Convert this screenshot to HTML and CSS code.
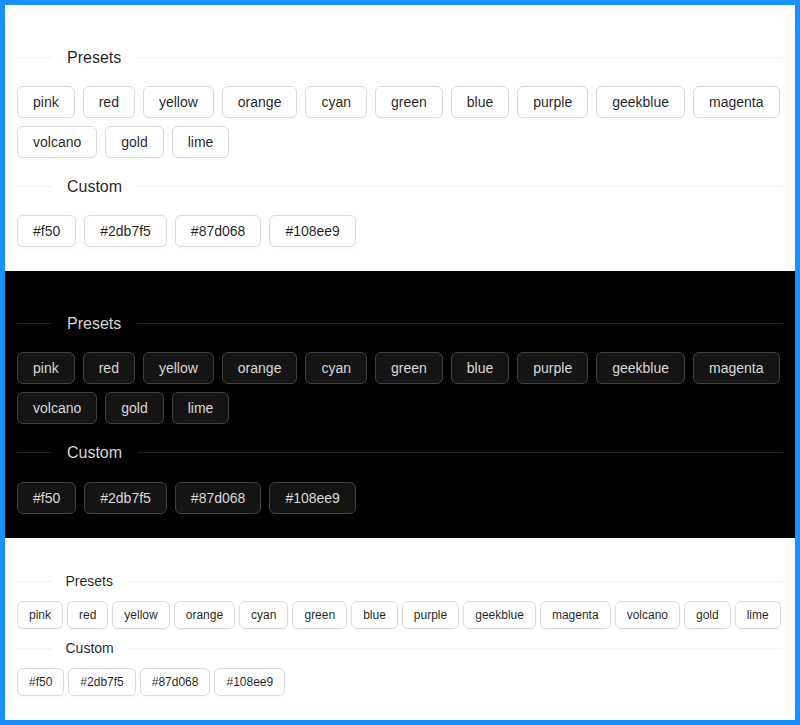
FILE: index.html
```html
<!DOCTYPE html>
<html>
<head>
<meta charset="utf-8">
<link rel="stylesheet" href="styles.css">
</head>
<body>
<div class="frame">
  <section class="panel light">
    <div class="divider"><span class="divider-text">Presets</span></div>
    <div class="space">
      <button class="btn">pink</button><button class="btn">red</button><button class="btn">yellow</button><button class="btn">orange</button><button class="btn">cyan</button><button class="btn">green</button><button class="btn">blue</button><button class="btn">purple</button><button class="btn">geekblue</button><button class="btn">magenta</button><button class="btn">volcano</button><button class="btn">gold</button><button class="btn">lime</button>
    </div>
    <div class="divider"><span class="divider-text">Custom</span></div>
    <div class="space">
      <button class="btn">#f50</button><button class="btn">#2db7f5</button><button class="btn">#87d068</button><button class="btn">#108ee9</button>
    </div>
  </section>
  <section class="panel dark">
    <div class="divider"><span class="divider-text">Presets</span></div>
    <div class="space">
      <button class="btn">pink</button><button class="btn">red</button><button class="btn">yellow</button><button class="btn">orange</button><button class="btn">cyan</button><button class="btn">green</button><button class="btn">blue</button><button class="btn">purple</button><button class="btn">geekblue</button><button class="btn">magenta</button><button class="btn">volcano</button><button class="btn">gold</button><button class="btn">lime</button>
    </div>
    <div class="divider"><span class="divider-text">Custom</span></div>
    <div class="space">
      <button class="btn">#f50</button><button class="btn">#2db7f5</button><button class="btn">#87d068</button><button class="btn">#108ee9</button>
    </div>
  </section>
  <section class="panel light compact">
    <div class="divider"><span class="divider-text">Presets</span></div>
    <div class="space">
      <button class="btn">pink</button><button class="btn">red</button><button class="btn">yellow</button><button class="btn">orange</button><button class="btn">cyan</button><button class="btn">green</button><button class="btn">blue</button><button class="btn">purple</button><button class="btn">geekblue</button><button class="btn">magenta</button><button class="btn">volcano</button><button class="btn">gold</button><button class="btn">lime</button>
    </div>
    <div class="divider"><span class="divider-text">Custom</span></div>
    <div class="space">
      <button class="btn">#f50</button><button class="btn">#2db7f5</button><button class="btn">#87d068</button><button class="btn">#108ee9</button>
    </div>
  </section>
</div>
</body>
</html>
```
FILE: styles.css
```css
* { box-sizing: border-box; }
html, body { margin: 0; padding: 0; }
body {
  font-family: "Liberation Sans", Arial, sans-serif;
  font-size: 14px;
  background: #fff;
}
.frame {
  width: 800px;
  height: 725px;
  border: 5px solid #1890ff;
  display: flex;
  flex-direction: column;
  overflow: hidden;
}
.panel {
  padding: 24px 12px;
}
.light { background: #fff; color: rgba(0,0,0,0.88); }
.dark { background: #000; color: rgba(255,255,255,0.85); }

.divider {
  display: flex;
  align-items: center;
  margin: 16px 0;
  font-size: 16px;
  line-height: 1.5714285714;
  font-weight: 500;
  white-space: nowrap;
}
.divider::before,
.divider::after {
  content: "";
  height: 1px;
  background: rgba(5,5,5,0.06);
}
.divider::before { width: 5%; }
.divider::after { width: 95%; }
.dark .divider::before,
.dark .divider::after { background: rgba(253,253,253,0.12); }
.divider-text { padding: 0 1em; }

.space {
  display: flex;
  flex-wrap: wrap;
  gap: 8px;
}
.btn {
  font-family: "Liberation Sans", Arial, sans-serif;
  font-size: 14px;
  line-height: 1.5714285714;
  height: 32px;
  padding: 4px 15px;
  border-radius: 6px;
  border: 1px solid #d9d9d9;
  background: #fff;
  color: rgba(0,0,0,0.88);
  box-shadow: 0 2px 0 rgba(0,0,0,0.02);
  cursor: pointer;
  margin: 0;
}
.dark .btn {
  background: #141414;
  border-color: #424242;
  color: rgba(255,255,255,0.85);
}

.compact .divider {
  margin: 8px 0;
  font-size: 14px;
  line-height: 1.6666667;
}
.compact .space { gap: 4px; }
.compact .btn {
  font-size: 12px;
  line-height: 20px;
  height: 28px;
  padding: 3px 11px;
  border-radius: 6px;
}
```
